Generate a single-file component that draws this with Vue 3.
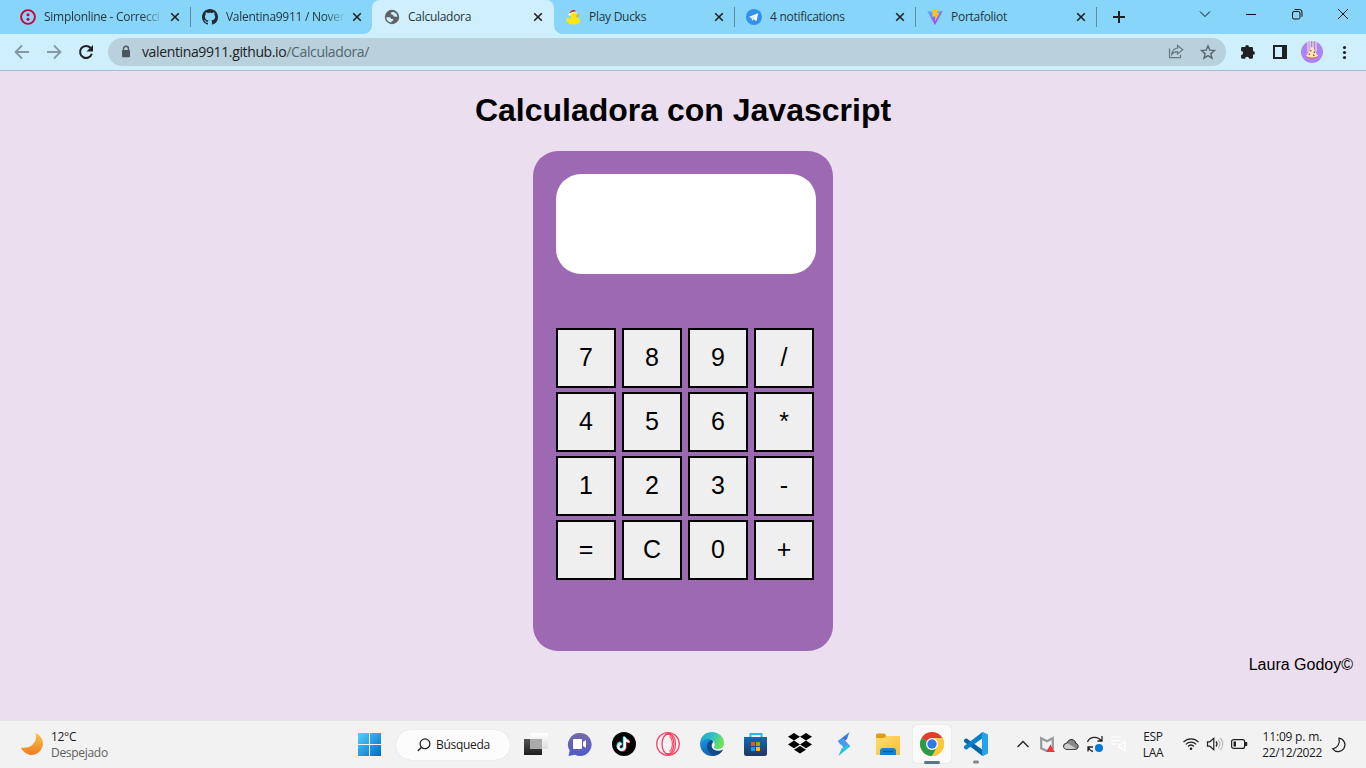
<script setup>
const keys = ['7', '8', '9', '/', '4', '5', '6', '*', '1', '2', '3', '-', '=', 'C', '0', '+']
const tabs = [
  { title: 'Simplonline - Correcci', icon: 'simplon', cls: 'sep first fade' },
  { title: 'Valentina9911 / Nover', icon: 'github', cls: 'fade' },
  { title: 'Calculadora', icon: 'globe', cls: 'active' },
  { title: 'Play Ducks', icon: 'duck', cls: 'sep later' },
  { title: '4 notifications', icon: 'telegram', cls: 'sep later' },
  { title: 'Portafoliot', icon: 'vite', cls: 'sep later' },
]
</script>

<template>
  <div class="screen">
    <header class="tabstrip">
      <div v-for="t in tabs" :key="t.title" class="tab" :class="t.cls">
        <svg class="fav" viewBox="0 0 16 16">
          <g v-if="t.icon === 'simplon'">
            <circle cx="8" cy="8" r="6.9" fill="none" stroke="#ce0033" stroke-width="1.9" />
            <circle cx="8" cy="5.7" r="1.5" fill="#ce0033" /><circle cx="8" cy="10.2" r="1.5" fill="#ce0033" />
          </g>
          <path v-else-if="t.icon === 'github'" fill="#24292f" d="M8 0C3.58 0 0 3.58 0 8c0 3.54 2.29 6.53 5.47 7.59.4.07.55-.17.55-.38 0-.19-.01-.82-.01-1.49-2.01.37-2.53-.49-2.69-.94-.09-.23-.48-.94-.82-1.13-.28-.15-.68-.52-.01-.53.63-.01 1.08.58 1.23.82.72 1.21 1.87.87 2.33.66.07-.52.28-.87.51-1.07-1.78-.2-3.64-.89-3.64-3.95 0-.87.31-1.59.82-2.15-.08-.2-.36-1.02.08-2.12 0 0 .67-.21 2.2.82.64-.18 1.32-.27 2-.27s1.36.09 2 .27c1.53-1.04 2.2-.82 2.2-.82.44 1.1.16 1.92.08 2.12.51.56.82 1.27.82 2.15 0 3.07-1.87 3.75-3.65 3.95.29.25.54.73.54 1.48 0 1.07-.01 1.93-.01 2.2 0 .21.15.46.55.38A8.01 8.01 0 0 0 16 8c0-4.42-3.58-8-8-8z" />
          <g v-else-if="t.icon === 'globe'">
            <circle cx="8" cy="8" r="7.2" fill="#5f6368" />
            <path d="M2.300 8.300h3.200c1.300 0 1.600.8 1.500 1.700h1.600c.6 0 .8.6.6 1.200l-.7.7c-.8.1-1 .6-.9 1.600-3 0-5.300-2.200-5.300-5.200zM7.900 3c-.6.500-.9 1.100-.9 1.800 0 .7.500.9 1.300.9.900 0 1 .5 1.300 1.200.2.500.9.800 1.600.800h2.200c-.1-2.800-2.500-4.700-5.500-4.700z" fill="#d0effc" />
          </g>
          <g v-else-if="t.icon === 'duck'">
            <path d="M1.200 8.500 4 9.700c1-.5 2-.8 2.300-1.300C4.700 5.400 5.500 3 8.300 2.700c2.700 0 4 1.700 3.700 3.900l-.6 1.600c2.600 1 4 2.500 3.600 4.300-.4 1.800-2.900 3-6.200 3-4.600 0-7.400-1.700-7.600-7z" fill="#ffe70b" />
            <path d="m11.300 6.200 3.400-1-.8 2.600-3 .2z" fill="#f7a41d" /><path d="M4.800 4.200C5 1.400 9.500-.5 11.600 3z" fill="#d72525" />
            <path d="M5 5.200c1.200-1.500 4-2.400 6.800-2.200" stroke="#fff" stroke-width="1.100" fill="none" /><circle cx="4.500" cy="5.700" r="1.100" fill="#fff" />
          </g>
          <g v-else-if="t.icon === 'telegram'">
            <circle cx="8" cy="8" r="8" fill="#3390ec" /><path d="m2.800 8.100 9.300-3.800-1.600 8-3-2.100L6 11.700l-.4-2.600z" fill="#fff" /><path d="m5.700 9.300 4.400-3L6.700 10z" fill="#a9d4fa" />
          </g>
          <g v-else>
            <defs><linearGradient id="vt" x1="0" y1="0" x2=".5" y2="1"><stop stop-color="#41b9ff" /><stop offset="1" stop-color="#bd34fe" /></linearGradient></defs>
            <path d="M.2 2 8 3l7.800-1L8 16z" fill="url(#vt)" /><path d="m5.500.8 5.600-.8-1 4 2.400-.5L8 12.500l.3-5.200-3 .5z" fill="#ffc61f" />
          </g>
        </svg>
        <span class="title">{{ t.title }}</span>
        <svg class="close" viewBox="0 0 10 10"><path d="m1.200 1.200 7.600 7.600m0-7.600-7.600 7.600" stroke="#202124" stroke-width="1.600" /></svg>
      </div>
      <svg class="plus" viewBox="0 0 14 14"><path d="M7 1v12M1 7h12" stroke="#202124" stroke-width="2" /></svg>
      <div class="winctl">
        <svg viewBox="0 0 46 28"><path d="m18 11.500 5 5 5-5" /></svg>
        <svg viewBox="0 0 46 28"><path d="M18 14.500h10" /></svg>
        <svg viewBox="0 0 46 28"><rect x="18.500" y="11.500" width="7.500" height="7.500" rx="1.500" /><path d="M20.500 9.500h5a2.500 2.500 0 0 1 2.500 2.500v4.800" /></svg>
        <svg viewBox="0 0 46 28"><path d="m18 9 10 10m0-10L18 19" /></svg>
      </div>
    </header>

    <nav class="toolbar">
      <svg class="slot" viewBox="0 0 32 32" fill="none" stroke="#8499a4" stroke-width="1.800"><path d="M23 16H10.500M16 9.500 9.500 16l6.500 6.500" /></svg>
      <svg class="slot" viewBox="0 0 32 32" fill="none" stroke="#8499a4" stroke-width="1.800"><path d="M9 16h12.500M16 9.500l6.500 6.500-6.500 6.500" /></svg>
      <svg class="slot" viewBox="0 0 32 32"><path d="M20.600 12a6 6 0 1 0 1.200 5.800" fill="none" stroke="#202124" stroke-width="2" /><path d="M23 9v6.500h-6.500z" fill="#202124" /></svg>
      <div class="omnibox">
        <svg class="lock" viewBox="0 0 10 14"><path d="M2.500 5.500V3.700a2.500 2.500 0 0 1 5 0v1.800" fill="none" stroke="#4d565c" stroke-width="1.400" /><rect x="1" y="5" width="8" height="7.300" rx="1" fill="#4d565c" /></svg>
        <span class="url">valentina9911.github.io<i>/Calculadora/</i></span>
        <svg class="slot share" viewBox="0 0 32 32" fill="none" stroke="#667780" stroke-width="1.200"><path d="M9.500 12.500v9.200h11v-3M17.500 9.500l5.200 4.300-5.200 4.300v-2.500c-2.600-.1-4.200.7-5.700 2.900.3-3.900 2.200-6 5.700-6.500z" /></svg>
        <svg class="slot" viewBox="0 0 32 32" fill="none" stroke="#5a686f" stroke-width="1.400"><path d="m16 9.800 1.800 4.300 4.700.4-3.600 3.100 1.100 4.600-4-2.500-4 2.500 1.100-4.600-3.600-3.100 4.700-.4z" /></svg>
      </div>
      <svg class="slot" viewBox="0 0 32 32"><path d="M10.300 11h2.900a1.900 1.900 0 0 1 3.800 0h2.800c.7 0 1.200.5 1.200 1.200V15a1.900 1.900 0 0 1 0 3.800v2.800c0 .7-.5 1.200-1.200 1.200h-2.700a2 2 0 0 0-4 0h-2.800c-.7 0-1.200-.5-1.200-1.200v-2.700a2 2 0 0 0 0-4v-2.700c0-.7.500-1.200 1.200-1.200z" fill="#202124" /></svg>
      <svg class="slot" viewBox="0 0 32 32"><path d="M9 9h14v14H9zM11 11v10h7V11z" fill="#202124" fill-rule="evenodd" /></svg>
      <svg class="slot" viewBox="0 0 32 32">
        <circle cx="16" cy="16" r="11" fill="#ad83fa" />
        <path d="M12 5.700v10M14.200 5v9M17 5v8M20 5.600v10" stroke="#efd9bd" stroke-width="1.300" /><path d="M16 10.500 22 20c-2.500 2.700-9.500 2.700-12 0z" fill="#ffedc2" />
        <path d="M9.300 19.500c2.500 2.500 11 2.500 13.400 0-1.800 4.300-11.500 4.300-13.400 0z" fill="#e76845" /><path d="M14 14h1.500v1.500H14zM17.500 15.500H19V17h-1.500zM12.500 17.500H14V19h-1.500zM17 18.500h1.500V20H17z" fill="#e03c31" />
      </svg>
      <svg class="slot" viewBox="0 0 32 32" fill="#202124"><circle cx="16.500" cy="11.500" r="1.600" /><circle cx="16.500" cy="16.500" r="1.600" /><circle cx="16.500" cy="21.500" r="1.600" /></svg>
    </nav>

    <main class="page">
      <h1>Calculadora con Javascript</h1>
      <section class="calc">
        <div class="display"></div>
        <div class="keys"><button v-for="k in keys" :key="k">{{ k }}</button></div>
      </section>
      <footer>Laura Godoy©</footer>
    </main>

    <div class="taskbar">
      <svg class="moon" viewBox="0 0 24 24"><defs><linearGradient id="mn" x1="0" y1="0" x2="0" y2="1"><stop stop-color="#f5c84a" /><stop offset="1" stop-color="#ee7b20" /></linearGradient></defs><path d="M15.500 1a11.300 11.300 0 1 1-14.500 14.500C11 17.500 18 9.500 15.500 1z" fill="url(#mn)" /></svg>
      <div class="weather"><span>12°C</span><span class="dim">Despejado</span></div>
      <svg class="app win" viewBox="0 0 44 44"><defs><linearGradient id="wn" x1="0" y1="0" x2="1" y2="1"><stop stop-color="#53d2fb" /><stop offset="1" stop-color="#0069ca" /></linearGradient></defs><path d="M10 11h11v11H10zM22 11h11v11H22zM10 23h11v11H10zM22 23h11v11H22z" fill="url(#wn)" /></svg>
      <div class="search">
        <svg viewBox="0 0 14 14"><path d="M4.300 9.500.8 13" stroke="#222" stroke-width="1.400" /><circle cx="8" cy="5.800" r="4.900" fill="none" stroke="#222" stroke-width="1.300" /></svg><span>Búsqueda</span>
      </div>
      <svg class="app" viewBox="0 0 44 44"><defs><linearGradient id="tv" x1="0" y1="0" x2="0" y2="1"><stop stop-color="#555" /><stop offset="1" stop-color="#1d1d1d" /></linearGradient><linearGradient id="tw" x1="0" y1="0" x2="0" y2="1"><stop stop-color="#fff" /><stop offset="1" stop-color="#dedede" /></linearGradient></defs><path d="M10 17h18v16H10z" fill="url(#tv)" /><path d="M16 11h18v16H16z" fill="url(#tw)" /><path d="M16 17h12v10H16z" fill="#aaa" /></svg>
      <svg class="app" viewBox="0 0 44 44"><defs><linearGradient id="ch" x1="0" y1="0" x2="0" y2="1"><stop stop-color="#7769a8" /><stop offset="1" stop-color="#5059c9" /></linearGradient></defs><path d="M22 11a11.500 11.500 0 1 1-5 21.800L10.500 34l1.200-5.500A11.500 11.500 0 0 1 22 11z" fill="url(#ch)" /><rect x="15" y="17" width="9" height="10" rx="1" fill="#fff" /><path d="m25 20 3-2v8l-3-2z" fill="#fff" /></svg>
      <svg class="app" viewBox="0 0 44 44"><circle cx="22" cy="22" r="12" fill="#000" /><g fill="none" stroke-width="2.200"><path d="M22.500 15v9.500a3.200 3.200 0 1 1-3.200-3.200M22.500 15c.4 2.500 2 4 4.500 4.300" stroke="#25f4ee" transform="translate(-.6 -.6)" /><path d="M22.500 15v9.500a3.200 3.200 0 1 1-3.200-3.200M22.500 15c.4 2.500 2 4 4.500 4.300" stroke="#fe2c55" transform="translate(1 .9)" /><path d="M22.500 15v9.500a3.200 3.200 0 1 1-3.200-3.200M22.500 15c.4 2.500 2 4 4.500 4.300" stroke="#fff" transform="translate(.3 .3)" /></g></svg>
      <svg class="app" viewBox="0 0 44 44" fill="none" stroke="#fa4262" stroke-width="1.300"><circle cx="22" cy="22" r="11.300" /><ellipse cx="22" cy="22" rx="6" ry="10" /><path d="M23.500 14.500c3.800 2.500 3.800 12.500 0 15M20 12.500c5-3 9.500 2 9.500 9.500s-4.500 12.500-9.500 9.500" stroke-width="1.100" /></svg>
      <svg class="app" viewBox="0 0 44 44"><defs><linearGradient id="ed" x1="0" y1="0" x2="1" y2=".3"><stop stop-color="#209ed5" /><stop offset=".55" stop-color="#2fc2c6" /><stop offset="1" stop-color="#6de354" /></linearGradient><linearGradient id="eb" x1="0" y1="0" x2=".6" y2="1"><stop stop-color="#1f96e4" /><stop offset="1" stop-color="#0c59a4" /></linearGradient></defs><path d="M10 21c2-4.500 8-6 12-3 2.500 2 0 3-.5 5.500-.5 4 6 7 11.500 4-2 4-6 6.500-11 6.500-7 0-12-5.500-12-13z" fill="url(#eb)" /><path d="M19 19.500c-3.500 3.500-2.500 11 5 14.200 4-.3 7-2.600 8.700-5.700-5.200 2.700-11.200.5-11.200-4.500 0-2 1.500-3 1.200-4.700-1.200-.8-2.500-.5-3.700.7z" fill="#114a8b" /><path d="M10 21C11 13.500 16 10 22 10c7 0 12 5 12 11 0 4-3 6-6.500 6-3 0-4.300-1-3.300-2.500 1.800-2.700-.5-6.500-4.500-7.300-4-.6-7.700 1-9.700 3.800z" fill="url(#ed)" /></svg>
      <svg class="app" viewBox="0 0 44 44"><defs><linearGradient id="st" x1="0" y1="0" x2="0" y2="1"><stop stop-color="#106abb" /><stop offset="1" stop-color="#20365f" /></linearGradient></defs><path d="M16.500 18v-6h11v6" fill="none" stroke="#2fb3ef" stroke-width="2" /><path d="M10 15h23v16.500a2.500 2.500 0 0 1-2.500 2.500h-18a2.500 2.500 0 0 1-2.500-2.500z" fill="url(#st)" /><path d="M17 20h4v4h-4z" fill="#f25022" /><path d="M22 20h4v4h-4z" fill="#7fba00" /><path d="M17 25h4v4h-4z" fill="#00a4ef" /><path d="M22 25h4v4h-4z" fill="#ffb900" /></svg>
      <svg class="app" viewBox="0 0 44 44"><path d="m16 11 6 3.800-6 3.800-6-3.800zM28 11l6 3.800-6 3.800-6-3.800zM16 18.600l6 3.800-6 3.800-6-3.800zM28 18.600l6 3.800-6 3.800-6-3.800zM22 24l6 3.800-6 3.800-6-3.800z" fill="#000" /></svg>
      <svg class="app" viewBox="0 0 44 44"><defs><linearGradient id="sa" x1="0" y1="0" x2="0" y2="1"><stop stop-color="#3c8cf0" /><stop offset="1" stop-color="#3a55cf" /></linearGradient></defs><path d="M27.500 10 16 19l2.500 3.500L25 17z" fill="url(#sa)" /><path d="m16 19 5-3 7.300 8.300-5 3.200z" fill="#4b9bf2" /><path d="M28.300 24.300 16.500 34l3-7.500 5-3.500z" fill="#27c4df" /></svg>
      <svg class="app" viewBox="0 0 44 44"><defs><linearGradient id="fo" x1="0" y1="0" x2="1" y2="1"><stop stop-color="#ffdc70" /><stop offset="1" stop-color="#fbbd36" /></linearGradient></defs><path d="M10 13a1.500 1.500 0 0 1 1.500-1.500h7L20.500 14v4H10z" fill="#df9d14" /><path d="M10 16h8l3-2h12a1 1 0 0 1 1 1v18H10z" fill="url(#fo)" /><path d="M14 33v-4a3 3 0 0 1 3-3h10a3 3 0 0 1 3 3v4z" fill="#1681d2" /><path d="M17 29.500h10" stroke="#085aa1" stroke-width="1.500" /></svg>
      <div class="app tile">
        <svg viewBox="0 0 44 44"><circle cx="22" cy="22" r="12" fill="#fcc934" /><path d="M22 22 11.600 16A12 12 0 0 1 32.400 16z" fill="#e33b2e" /><path d="m22 22-10.400-6A12 12 0 0 0 22 34l5.200-9z" fill="#2b9a4a" /><path d="M22 16h10.400A12 12 0 0 1 22 34l5.200-9z" fill="#fcc934" /><circle cx="22" cy="22" r="6" fill="#fff" /><circle cx="22" cy="22" r="4.700" fill="#2d78ed" /></svg>
      </div>
      <svg class="app" viewBox="0 0 44 44"><path d="m12.300 16.200 16.200 11.600V34L10 19.800v-2z" fill="#0065a9" /><path d="m12.300 27.800 16.200-11.600V10L10 24.200v2z" fill="#087fc9" /><path d="M28 10h1l5 2.500v19L29 34h-1z" fill="#24a2ec" /><rect x="19" y="38.500" width="6" height="3" rx="1.500" fill="#858585" /></svg>
      <div class="tray">
        <svg viewBox="0 0 24 24" fill="none" stroke="#222" stroke-width="1.400"><path d="m6.500 15 5.500-5.500 5.500 5.500" /></svg>
        <svg viewBox="0 0 24 24"><path d="M6.200 6.200 12 9.300l5.800-3.100v10L12 19l-5.800-2.800z" fill="none" stroke="#96999d" stroke-width="2.200" /><path d="m15.500 12.500 4.300 7.500h-8.600z" fill="#ef3737" /></svg>
        <svg viewBox="0 0 24 24"><path d="M8 17.300c-4.800 0-4.500-6.300 0-6.200 2-5.700 8.500-3.800 8.700.3 3.300.2 3.500 5.800-.3 5.900z" fill="#888" stroke="#222" /><path d="m9 11.500 8 5c-3 .6-9 .5-10.500 0-3-1-.5-5 2.500-5z" fill="#ccc" /></svg>
        <svg viewBox="0 0 24 24"><path d="M4.500 10c2-5.500 10-6.500 14-1M19 4v5h-4.500M5 19.500V15h5M5 15c1 2 2.500 4 5 4.500" fill="none" stroke="#222" stroke-width="1.300" /><circle cx="16" cy="16" r="4" fill="#0078d7" /></svg>
        <svg viewBox="0 0 24 24" fill="none" stroke="#fff" stroke-width="1.200"><path d="M4 5h10M4 8.500h10M4 12h6M12 12.500h2l4-3.500v10l-4-3.500h-2z" /></svg>
      </div>
      <div class="lang"><span>ESP</span><span>LAA</span></div>
      <svg class="sys" viewBox="0 0 24 24" fill="none" stroke="#222" stroke-width="1.200"><path d="M4.500 10c4.300-4.300 10.700-4.300 15 0M6.800 12.300c3-3 7.400-3 10.400 0M9 14.500c1.800-1.800 4.200-1.800 6 0" /><circle cx="12" cy="16.700" r="1.300" fill="#222" stroke="none" /></svg>
      <svg class="sys" viewBox="0 0 24 24" fill="none" stroke="#222" stroke-width="1.200"><path d="M4.500 9.800h2.300l4-3.500v11.400l-4-3.500H4.500z" /><path d="M13 9.500c1.300 1.500 1.300 3.500 0 5" /><path d="M15 7.700c2.300 2.500 2.300 6 0 8.600M17.300 6c3.300 3.500 3.300 8.500 0 12" stroke="#bbb" /></svg>
      <svg class="sys" viewBox="0 0 24 24"><rect x="4.600" y="7.600" width="13" height="8.800" rx="2" fill="none" stroke="#222" stroke-width="1.200" /><path d="M6.500 9.500H9v5H6.500zM18 10h2.200v4H18z" fill="#222" /></svg>
      <div class="clock"><span>11:09 p. m.</span><span class="date">22/12/2022</span></div>
      <svg class="focus" viewBox="0 0 16 16" fill="none" stroke="#222" stroke-width="1.200"><path d="M8 1.200a6.700 6.700 0 1 1-6.200 10.600C6.500 11 9.300 6.500 8 1.200z" /></svg>
    </div>
  </div>
</template>

<style>
body { background: #ebdeee; overflow: hidden; }
</style>

<style scoped>
.screen { width: 1366px; height: 768px; display: flex; flex-direction: column; background: #ebdeee; overflow: hidden; font-family: "Open Sans", "Noto Sans", sans-serif; font-size: 12px; color: #1b1b1b; }
svg { display: block; flex: none; }
.tabstrip { height: 34px; flex: none; display: flex; background: #87d6fa; padding-left: 10px; box-sizing: border-box; }
.tab { position: relative; width: 181px; height: 34px; box-sizing: border-box; padding-left: 11px; display: flex; align-items: center; flex: none; }
.tab.first { padding-left: 10px; }
.tab.sep::after { content: ""; position: absolute; right: 0; top: 7px; width: 1px; height: 20px; background: #5d8ba0; }
.tab.sep:not(.first)::after { right: -1px; }
.tab.active { width: 182px; margin-right: -1px; background: #d0effc; border-radius: 8px 8px 0 0; padding-left: 12px; }
.tab.active::before, .tab.active::after { content: ""; position: absolute; bottom: 0; width: 8px; height: 8px; }
.tab.active::before { left: -8px; background: radial-gradient(circle at 0 0, transparent 7.500px, #d0effc 8px); }
.tab.active::after { right: -8px; background: radial-gradient(circle at 100% 0, transparent 7.500px, #d0effc 8px); }
.later { padding-left: 12px; }
.fav { width: 16px; height: 16px; margin-right: 8px; }
.title { width: 123px; white-space: nowrap; color: #26343c; letter-spacing: -0.28px; line-height: 20px; }
.active .title, .later .title { width: 122px; }
.fade .title { mask-image: linear-gradient(90deg, #000 98px, transparent 120px); }
.close { width: 10px; height: 10px; margin-left: 3px; }
.plus { width: 14px; height: 14px; margin: 10px 0 0 16px; }
.winctl { display: flex; margin-left: auto; }
.winctl svg { width: 46px; height: 28px; fill: none; stroke: #111; stroke-width: 1; }
.toolbar { height: 37px; flex: none; box-sizing: border-box; border-bottom: 1px solid #a9bccb; background: #d0effc; padding: 0 6px; display: flex; align-items: center; }
.slot { width: 32px; height: 32px; }
.omnibox { flex: 1; height: 28px; margin: 0 6px; border-radius: 14px; background: #b8d1dc; display: flex; align-items: center; padding: 0 2px 0 13px; overflow: hidden; }
.lock { width: 10px; height: 14px; margin-right: 11px; }
.share { margin-left: auto; }
.url { font-size: 14px; letter-spacing: -0.37px; color: #202124; line-height: 20px; }
.url i { font-style: normal; color: #55646c; }
.page { flex: 1; display: flex; flex-direction: column; align-items: center; font-family: "Liberation Sans", Arial, sans-serif; color: #000; }
h1 { margin: 21px 0 22px; font-size: 32px; line-height: 37px; font-weight: 700; }
.calc { width: 300px; height: 500px; flex: none; box-sizing: border-box; padding: 23px; border-radius: 25px; background: #9d69b3; }
.display { width: 260px; height: 100px; background: #fff; border-radius: 25px; }
.keys { margin-top: 54px; display: grid; grid-template-columns: repeat(4, 60px); gap: 4px 6px; }
.keys button { height: 60px; padding: 0 0 2px; border: 2px solid #000; border-radius: 0; background: #efefef; font: 25px "Liberation Sans", Arial, sans-serif; color: #000; }
footer { align-self: flex-end; margin: 5px 13px 0 0; font-size: 16px; line-height: 18px; }
.taskbar { height: 48px; flex: none; box-sizing: border-box; border-top: 1px solid #e6e2e7; background: #f2f2f2; display: flex; align-items: center; }
.moon { width: 24px; height: 24px; margin: 0 0 2px 20px; }
.weather { width: 297px; padding-left: 7px; }
.weather, .lang, .clock { display: flex; flex-direction: column; line-height: 16px; letter-spacing: -0.3px; }
.dim { color: #5f5f5f; }
.app { width: 44px; height: 44px; flex: none; margin-bottom: 1px; }
.search { width: 114px; height: 30px; margin: 0 4px; box-sizing: border-box; border-radius: 15px; background: #fcfcfc; box-shadow: 0 0 1px #ccc; display: flex; align-items: center; padding-left: 21px; gap: 5px; letter-spacing: -0.3px; }
.search svg { width: 14px; height: 14px; }
.tile { position: relative; }
.tile::before { content: ""; position: absolute; left: 3px; top: 3px; width: 38px; height: 38px; border-radius: 4px; background: #fafafa; box-shadow: 0 0 1px #bbb; }
.tile::after { content: ""; position: absolute; left: 14px; bottom: 2px; width: 16px; height: 3px; border-radius: 2px; background: #5b7583; }
.tile svg { position: relative; width: 44px; height: 44px; }
.tray { display: flex; margin-left: 13px; }
.tray svg, .sys { width: 24px; height: 24px; margin-bottom: 1px; }
.lang { width: 48px; align-items: center; margin: 0 -2px; }
.lang + .sys { margin-left: 4px; }
.clock { margin-left: auto; align-items: flex-end; letter-spacing: -0.2px; }
.date { letter-spacing: -0.4px; }
.focus { width: 16px; height: 16px; margin: 0 19px 0 9px; }
</style>
